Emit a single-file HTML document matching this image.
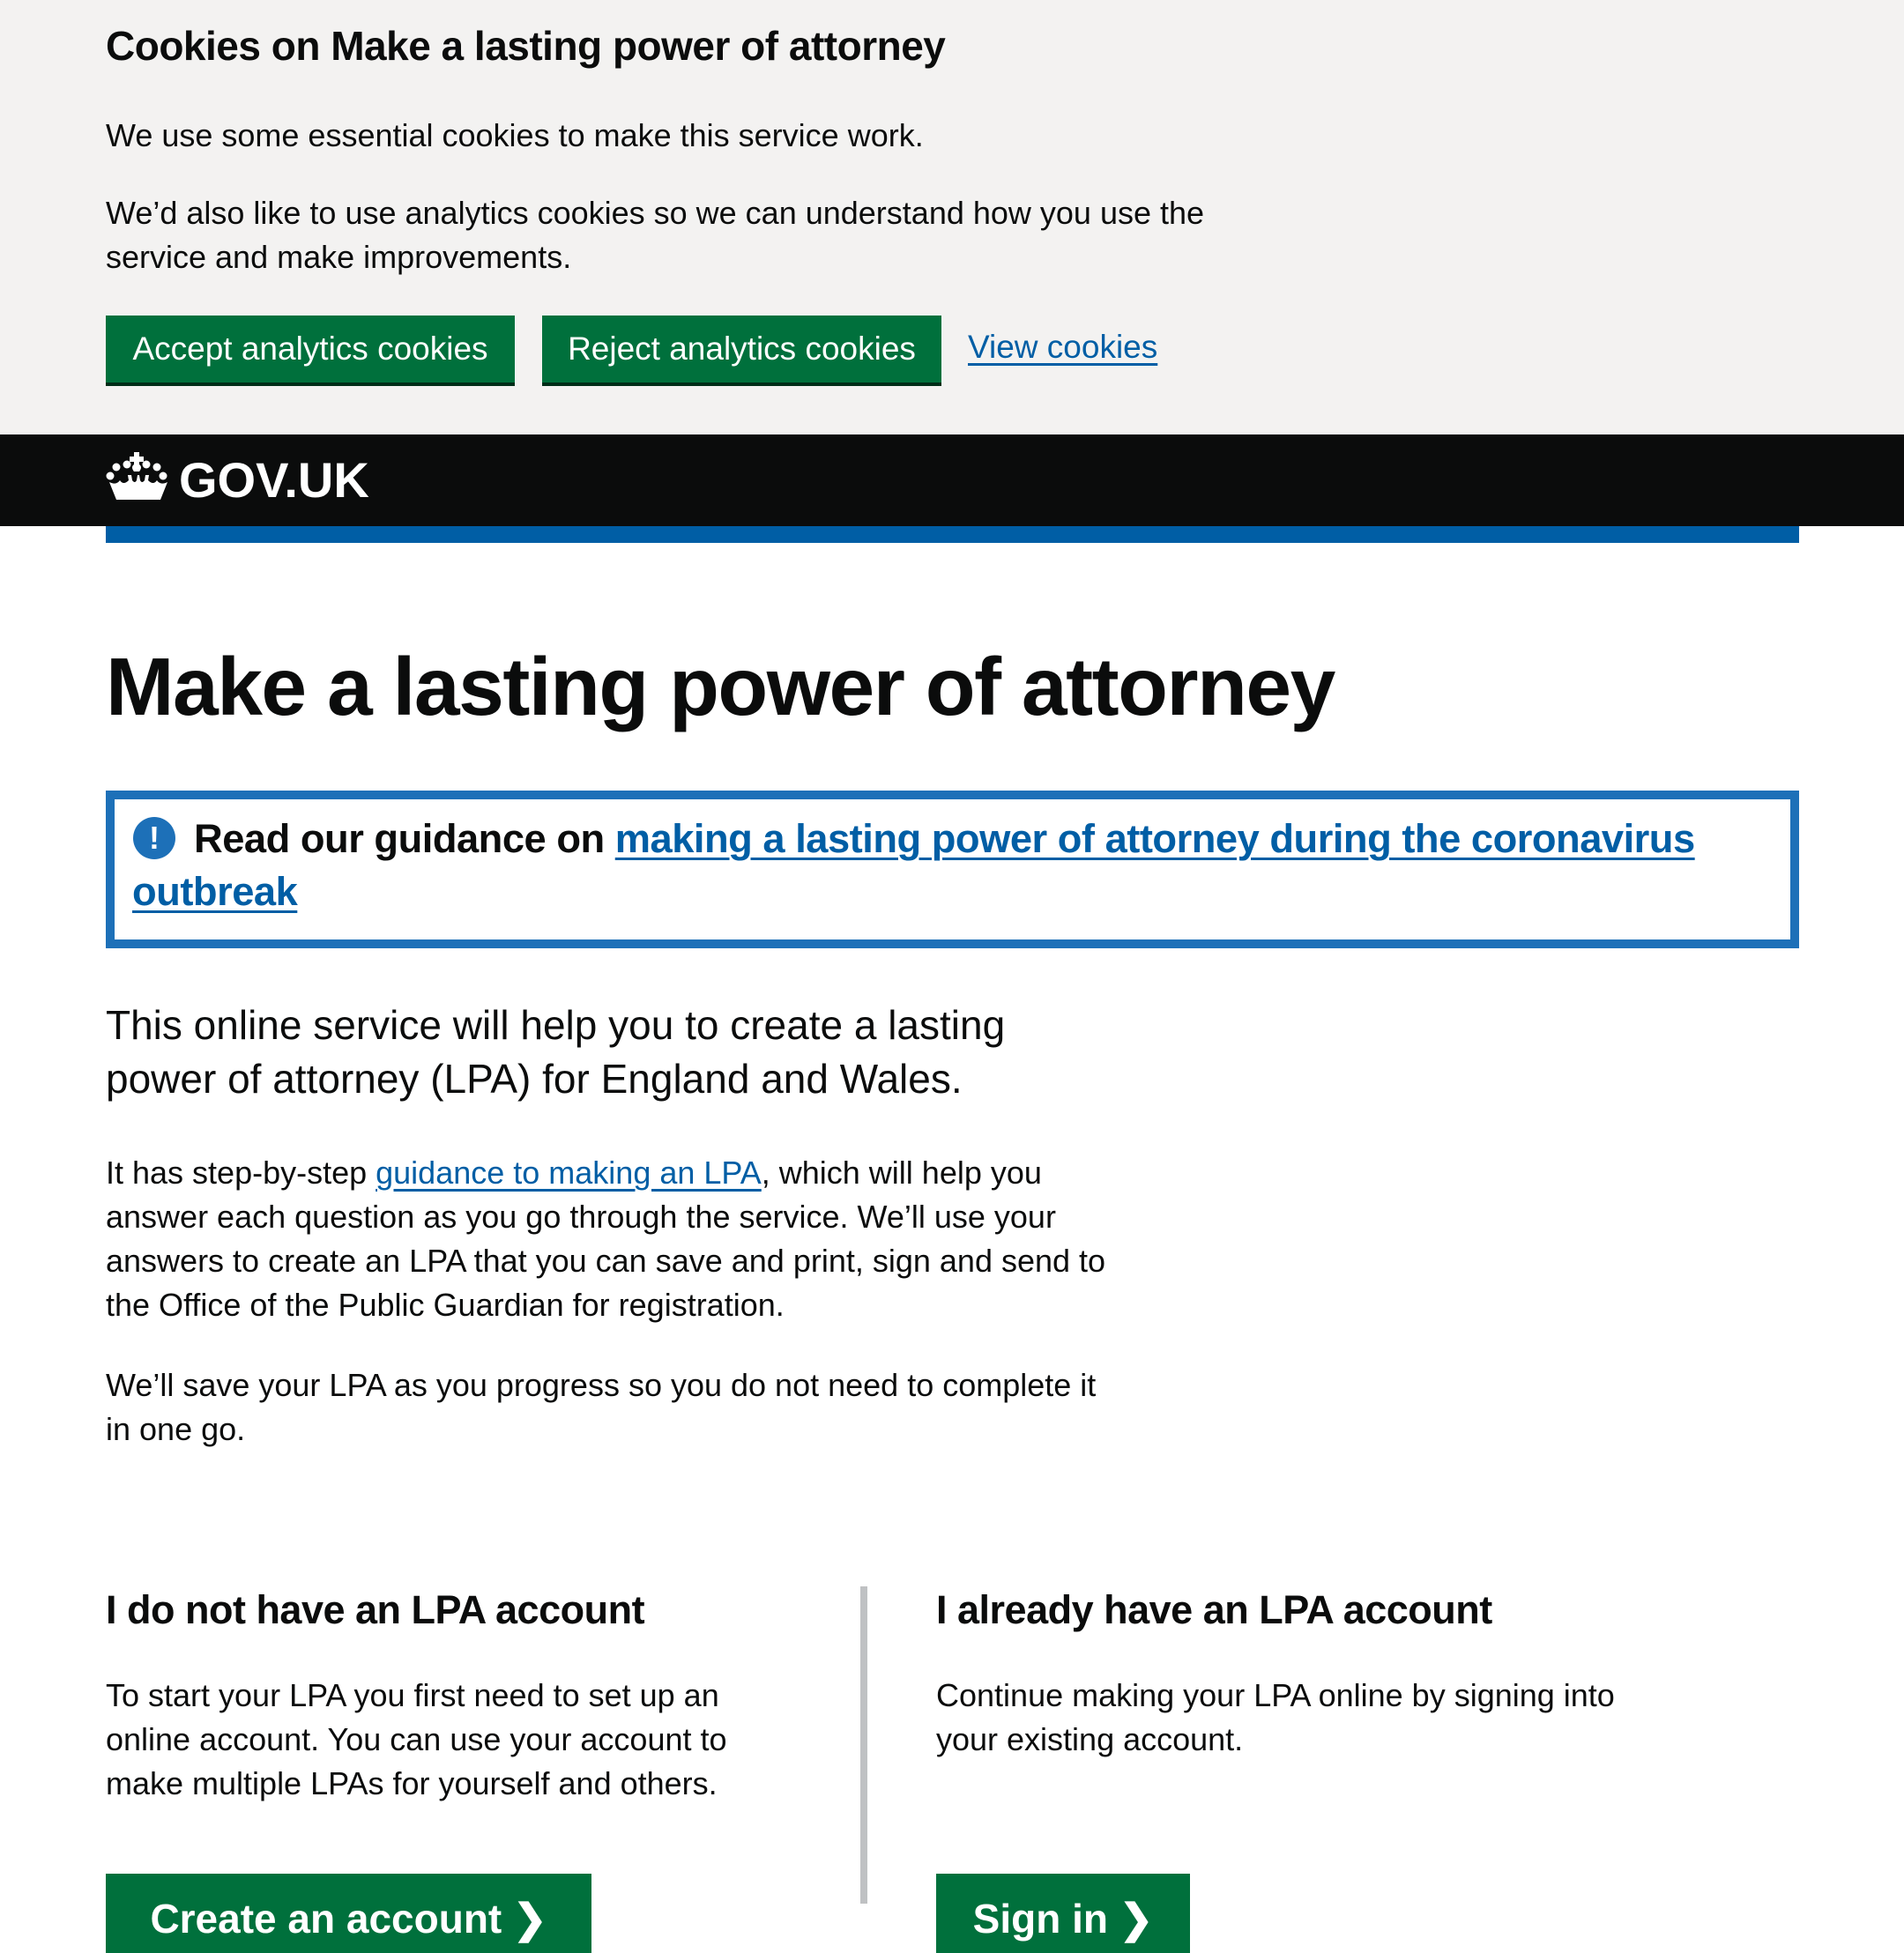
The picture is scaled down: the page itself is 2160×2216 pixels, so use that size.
<!DOCTYPE html>
<html><head><meta charset="utf-8"><style>
*{margin:0;padding:0;box-sizing:border-box}
body{width:2160px;height:2160px;overflow:hidden;background:#fff;font-family:"Liberation Sans",Arial,sans-serif;color:#0b0c0c;position:relative}
.a{position:absolute;white-space:nowrap}
a{color:#005ea5;text-decoration:underline;text-decoration-thickness:3px;text-underline-offset:6px}
.btn{position:absolute;background:#00703c;color:#fff;box-shadow:0 4px 0 #002d18;font-size:37px;display:flex;align-items:center;justify-content:center}
</style></head><body>
<div class="a" style="left:0;top:0;width:2160px;height:493px;background:#f3f2f1"></div>
<div class="a" style="left:120px;top:24px;font-size:46px;font-weight:bold;line-height:56px;letter-spacing:-0.5px">Cookies on Make a lasting power of attorney</div>
<div class="a" style="left:120px;top:129px;font-size:36px;line-height:50px">We use some essential cookies to make this service work.</div>
<div class="a" style="left:120px;top:217px;font-size:36px;line-height:50px">We’d also like to use analytics cookies so we can understand how you use the<br>service and make improvements.</div>
<div class="btn" style="left:120px;top:358px;width:464px;height:76px">Accept analytics cookies</div>
<div class="btn" style="left:615px;top:358px;width:453px;height:76px">Reject analytics cookies</div>
<div class="a" style="left:1098px;top:369px;font-size:37px;line-height:50px"><a>View cookies</a></div>

<div class="a" style="left:0;top:493px;width:2160px;height:104px;background:#0b0c0c"></div>
<svg class="a" style="left:120px;top:513px" width="70" height="56" viewBox="0 0 70 56" fill="#fff">
<circle cx="5" cy="27" r="4.5"/><circle cx="12" cy="17" r="4.5"/><circle cx="24" cy="14" r="4.5"/><circle cx="46" cy="14" r="4.5"/><circle cx="58" cy="17" r="4.5"/><circle cx="65" cy="27" r="4.5"/>
<path d="M32 0h6v5h5v6h-5v3q4 3 0 8h-6q-4-5 0-8v-3h-5v-6h5z"/>
<path d="M4 34q8 4 12-2q4 6 10 0l-1-6h4l1 6q3 4 5 0l1-6h2l1 6q2 4 5 0l1-6h4l-1 6q6 6 10 0q4 6 12 2l-8 20h-50z"/>
</svg>
<div class="a" style="left:203px;top:512px;font-size:56px;font-weight:bold;color:#fff;line-height:66px">GOV.UK</div>
<div class="a" style="left:120px;top:597px;width:1921px;height:19px;background:#005ea5"></div>

<div class="a" style="left:120px;top:724px;font-size:93px;font-weight:bold;line-height:110px;letter-spacing:-1.5px">Make a lasting power of attorney</div>

<div class="a" style="left:120px;top:897px;width:1921px;height:179px;border:10px solid #1d70b8"></div>
<div class="a" style="left:151px;top:927px;width:48px;height:48px;border-radius:50%;background:#1d70b8;color:#fff;font-weight:bold;font-size:36px;text-align:center;line-height:48px">!</div>
<div class="a" style="left:150px;top:922px;font-size:45.3px;font-weight:bold;line-height:60px;letter-spacing:-0.5px"><span style="padding-left:70px">Read our guidance on </span><a>making a lasting power of attorney during the coronavirus</a><br><a>outbreak</a></div>

<div class="a" style="left:120px;top:1133px;font-size:46px;line-height:61px">This online service will help you to create a lasting<br>power of attorney (LPA) for England and Wales.</div>
<div class="a" style="left:120px;top:1306px;font-size:36px;line-height:50px">It has step-by-step <a>guidance to making an LPA</a>, which will help you<br>answer each question as you go through the service. We’ll use your<br>answers to create an LPA that you can save and print, sign and send to<br>the Office of the Public Guardian for registration.</div>
<div class="a" style="left:120px;top:1547px;font-size:36px;line-height:50px">We’ll save your LPA as you progress so you do not need to complete it<br>in one go.</div>

<div class="a" style="left:976px;top:1800px;width:8px;height:360px;background:#bfc1c3"></div>
<div class="a" style="left:120px;top:1797px;font-size:45px;font-weight:bold;line-height:60px;letter-spacing:-0.5px">I do not have an LPA account</div>
<div class="a" style="left:1062px;top:1797px;font-size:45px;font-weight:bold;line-height:60px;letter-spacing:-0.5px">I already have an LPA account</div>
<div class="a" style="left:120px;top:1899px;font-size:36px;line-height:50px">To start your LPA you first need to set up an<br>online account. You can use your account to<br>make multiple LPAs for yourself and others.</div>
<div class="a" style="left:1062px;top:1899px;font-size:36px;line-height:50px">Continue making your LPA online by signing into<br>your existing account.</div>
<div class="btn" style="left:120px;top:2126px;width:551px;height:90px;font-size:46px;font-weight:bold;align-items:flex-start;padding-top:24px">Create an account ❯</div>
<div class="btn" style="left:1062px;top:2126px;width:288px;height:90px;font-size:46px;font-weight:bold;align-items:flex-start;padding-top:24px">Sign in ❯</div>
</body></html>
